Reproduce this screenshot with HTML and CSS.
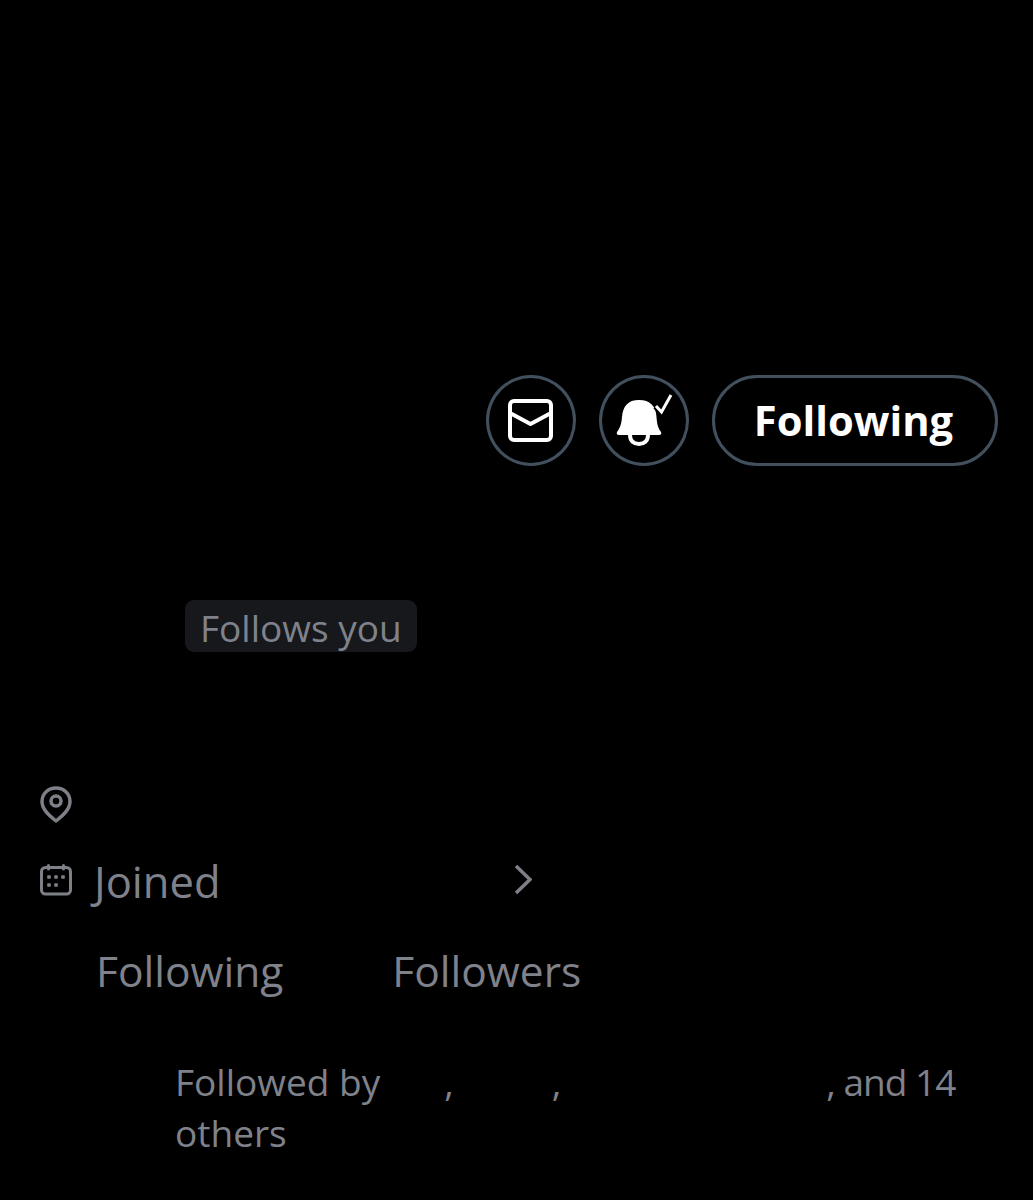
FILE: index.html
```html
<!DOCTYPE html>
<html lang="en">
<head>
    <meta charset="UTF-8">
    <meta name="viewport" content="width=device-width, initial-scale=1.0">
    <title>Profile</title>
    <link rel="stylesheet" href="styles.css">
</head>
<body>

<div class="actions">
    <button class="icon-button" aria-label="Message">
        <svg width="46" height="43" viewBox="0 0 46 43" fill="none" stroke="#fff" stroke-width="4" stroke-linejoin="round">
            <rect x="2" y="2" width="41" height="39" rx="4"/>
            <path d="M2 14 L22.500 25 L43 14"/>
        </svg>
    </button>
    <button class="icon-button" aria-label="Notifications">
        <svg width="60" height="56" viewBox="0 0 60 56">
            <path fill="#fff" d="M25 7 C14 7 9 13 8 24 C7.500 31 6 35 3 39 Q2 42 5 42 L45 42 Q48 42 47 39 C44 35 43 31 42.500 24 C42 13 36 7 25 7 Z"/>
            <path fill="none" stroke="#fff" stroke-width="4" d="M16 42 C16 48 20 51 25 51 C30 51 34 48 34 42"/>
            <path fill="none" stroke="#000" stroke-width="7" d="M42 13 L47.500 19 L57 2"/>
            <path fill="none" stroke="#fff" stroke-width="3" d="M42 13 L47.500 19 L57 2"/>
        </svg>
    </button>
    <button class="follow-button">Following</button>
</div>

<div class="badge-row">
    <span class="badge">Follows you</span>
</div>

<div class="meta">
    <div class="meta-row pin-row">
        <svg class="meta-icon" width="32" height="37" viewBox="0 0 32 37" fill="none" stroke="#7d8087" stroke-width="3.500">
            <path stroke-linejoin="round" d="M16 35 C10 30 2 24 2 15.500 C2 7.500 8.500 2 16 2 C23.500 2 30 7.500 30 15.500 C30 24 22 30 16 35 Z"/>
            <circle cx="16" cy="15" r="5"/>
        </svg>
    </div>
    <div class="meta-row joined-row">
        <svg class="meta-icon" width="32" height="34" viewBox="0 0 32 34" fill="none" stroke="#7d8087" stroke-width="3">
            <rect x="1.500" y="3.500" width="29" height="26.500" rx="4"/>
            <path stroke-linecap="round" d="M8.500 1.500 V5 M23.500 1.500 V5"/>
            <g fill="#7d8087" stroke="none">
                <rect x="7.200" y="11.200" width="3.600" height="3.600" rx="0.800"/>
                <rect x="14.200" y="11.200" width="3.600" height="3.600" rx="0.800"/>
                <rect x="21.200" y="11.200" width="3.600" height="3.600" rx="0.800"/>
                <rect x="7.200" y="19.200" width="3.600" height="3.600" rx="0.800"/>
                <rect x="14.200" y="19.200" width="3.600" height="3.600" rx="0.800"/>
            </g>
        </svg>
        <span class="joined">Joined</span>
        <svg class="chevron" width="18" height="32" viewBox="0 0 18 32" fill="none" stroke="#7d8087" stroke-width="3.500">
            <path d="M2 1 L16 14.500 L2 28"/>
        </svg>
    </div>
</div>

<div class="counts">
    <span class="following-count">Following</span>
    <span class="followers-count">Followers</span>
</div>

<p class="followed-by">
    Followed by<span class="name-short">,</span><span class="name-mid">,</span><span class="name-long">, and 14</span><br>others
</p>

</body>
</html>
```

FILE: styles.css
```css
body {
    margin: 0;
    height: 1200px;
    overflow: hidden;
    background-color: #000;
    color: #7f828a;
    font-family: "Open Sans", "Noto Sans", sans-serif;
}
button {
    font-family: inherit;
    background: #000;
    color: #fff;
    border: 3px solid #42505e;
    cursor: pointer;
    padding: 0;
}
.actions {
    display: flex;
    justify-content: flex-end;
    gap: 23px;
    padding: 375px 35px 0 0;
}
.icon-button {
    width: 90px;
    height: 91px;
    border-radius: 50%;
    display: flex;
    align-items: center;
    justify-content: center;
}
.follow-button {
    width: 286px;
    height: 91px;
    border-radius: 46px;
    padding: 0 3px 2px 0;
    font-size: 41.700px;
    font-weight: 700;
}
.badge-row {
    display: flex;
    padding: 134px 0 0 185px;
}
.badge {
    background: #16181c;
    border-radius: 9px;
    padding: 0 15px;
    height: 52px;
    line-height: 55px;
    font-size: 37px;
}
.meta {
    padding: 134px 0 0 40px;
}
.meta-row {
    display: flex;
    align-items: center;
}
.joined-row {
    margin-top: 33px;
    height: 50px;
}
.joined {
    font-size: 43.500px;
    margin-left: 22px;
}
.chevron {
    margin-left: 293px;
}
.counts {
    display: flex;
    padding: 35px 0 0 96px;
    font-size: 42.500px;
    line-height: 60px;
}
.followers-count {
    margin-left: 109px;
}
.followed-by {
    margin: 55px 0 0 175px;
    font-size: 37px;
    line-height: 51px;
}
.name-short {
    margin-left: 64px;
}
.name-mid {
    margin-left: 98px;
}
.name-long {
    margin-left: 265px;
    letter-spacing: -1px;
}
```
